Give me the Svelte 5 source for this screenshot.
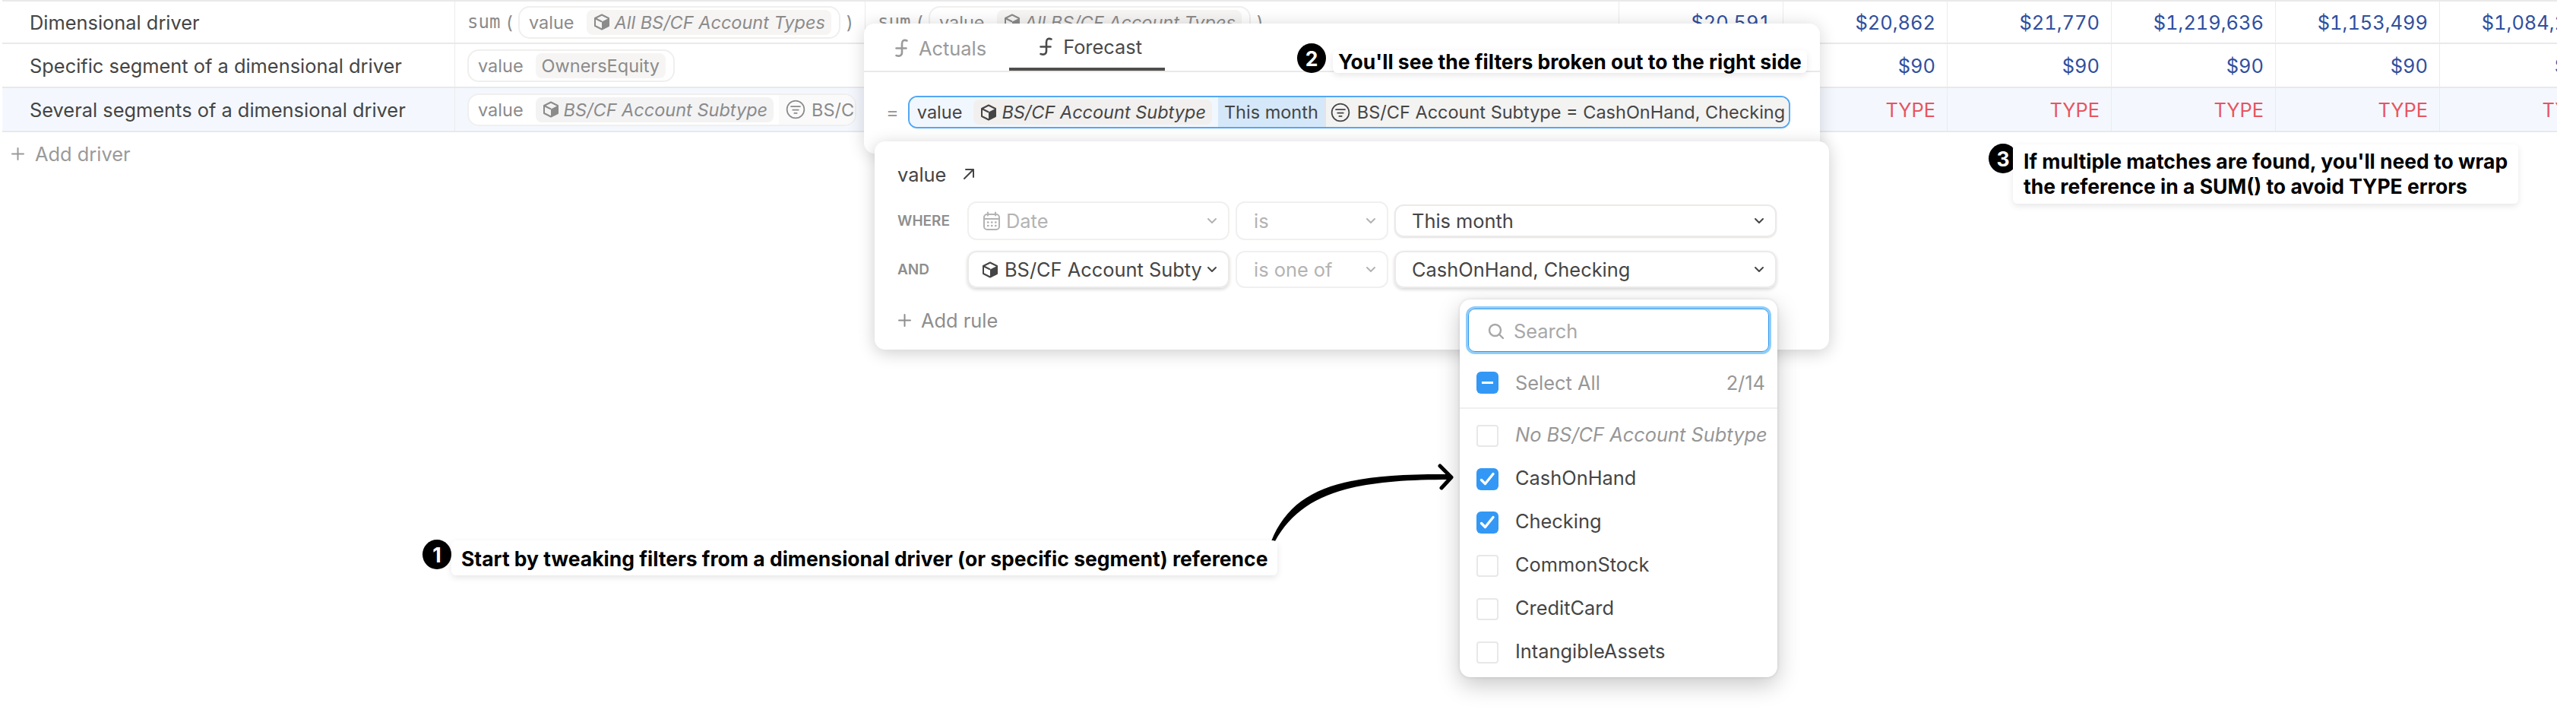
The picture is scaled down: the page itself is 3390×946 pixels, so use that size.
<script>
  const nums = [
    ['$20,591', '$20,862', '$21,770', '$1,219,636', '$1,153,499', '$1,084,217'],
    ['$90', '$90', '$90', '$90', '$90', '$90'],
    ['TYPE', 'TYPE', 'TYPE', 'TYPE', 'TYPE', 'TYPE']
  ];
  const options = [
    { label: 'No BS/CF Account Subtype', none: true },
    { label: 'CashOnHand', on: true },
    { label: 'Checking', on: true },
    { label: 'CommonStock' },
    { label: 'CreditCard' },
    { label: 'IntangibleAssets' }
  ];
</script>

{#snippet cube(size)}
  <svg class="ic" width={size} height={size} viewBox="0 0 24 24">
    <path d="M12 2.500 21 7v10l-9 4.500L3 17V7z" fill="none" stroke="currentColor" stroke-width="2" stroke-linejoin="round" />
    <path d="M12 11.500 21 7v10l-9 4.500z" fill="currentColor" />
    <path d="M3 7l9 4.500" stroke="currentColor" stroke-width="2" />
  </svg>
{/snippet}

{#snippet filter(size)}
  <svg class="ic" width={size} height={size} viewBox="0 0 24 24" fill="none" stroke="currentColor" stroke-width="1.600" stroke-linecap="round">
    <circle cx="12" cy="12" r="10.500" />
    <path d="M6.500 8.500h11M8.500 12.500h7M10.500 16.500h3" />
  </svg>
{/snippet}

{#snippet fn()}
  <svg class="ic" width="20" height="27" viewBox="0 0 20 27" fill="none" stroke="currentColor" stroke-width="2.600" stroke-linecap="round">
    <path d="M17.500 3.500c-4-1.500-6.500 0-6.500 4v11.500c0 4-3 5.500-7.500 4M3.500 13.500h13" />
  </svg>
{/snippet}

{#snippet chev()}
  <svg class="chev" width="14" height="9" viewBox="0 0 14 9" fill="none" stroke="currentColor" stroke-width="2" stroke-linecap="round" stroke-linejoin="round">
    <path d="M2 2l5 5 5-5" />
  </svg>
{/snippet}

{#snippet plus()}
  <svg class="ic" width="19" height="19" viewBox="0 0 19 19" stroke="currentColor" stroke-width="2" stroke-linecap="round">
    <path d="M9.500 2v15M2 9.500h15" />
  </svg>
{/snippet}

{#snippet pill(label, italic, withCube)}
  <span class="pill" class:em={italic}>
    {#if withCube}{@render cube(24)}{/if}
    {label}
  </span>
{/snippet}

<div class="page">
  <div class="table">
    <div class="row">
      <div class="cell name">Dimensional driver</div>
      <div class="cell">
        <span class="mono">sum</span><span class="paren">(</span>
        <span class="ref">value {@render pill('All BS/CF Account Types', true, true)}</span>
        <span class="paren close">)</span>
      </div>
      <div class="cell">
        <span class="mono">sum</span><span class="paren">(</span>
        <span class="ref">value {@render pill('All BS/CF Account Types', true, true)}</span>
        <span class="paren close">)</span>
      </div>
      {#each nums[0] as n}<div class="cell num">{n}</div>{/each}
    </div>
    <div class="row">
      <div class="cell name">Specific segment of a dimensional driver</div>
      <div class="cell">
        <span class="ref">value {@render pill('OwnersEquity', false, false)}</span>
      </div>
      <div class="cell"></div>
      {#each nums[1] as n}<div class="cell num">{n}</div>{/each}
    </div>
    <div class="row selected">
      <div class="cell name">Several segments of a dimensional driver</div>
      <div class="cell">
        <span class="ref clipped">
          value {@render pill('BS/CF Account Subtype', true, true)}
          <span class="filt">{@render filter(26)} BS/CF Account Subtype = CashOnHand, Checking</span>
        </span>
      </div>
      <div class="cell"></div>
      {#each nums[2] as n}<div class="cell num err">{n}</div>{/each}
    </div>
    <div class="add">{@render plus()} Add driver</div>
  </div>

  <!-- formula popover -->
  <div class="pop formula">
    <div class="tabs">
      <div class="tab">{@render fn()} Actuals</div>
      <div class="tab active">{@render fn()} Forecast</div>
    </div>
    <div class="field-row">
      <span class="eq">=</span>
      <div class="field">
        <div class="seg-main">value {@render pill('BS/CF Account Subtype', true, true)}</div>
        <div class="seg-date">This month</div>
        <div class="seg-filter">{@render filter(26)} BS/CF Account Subtype = CashOnHand, Checking</div>
      </div>
    </div>
  </div>

  <!-- rule editor -->
  <div class="pop rules">
    <div class="rules-title">
      value
      <svg width="16" height="16" viewBox="0 0 16 16" fill="none" stroke="currentColor" stroke-width="2" stroke-linecap="round" stroke-linejoin="round">
        <path d="M2 14 14 2M4 2h10v10" />
      </svg>
    </div>
    <div class="rule-grid">
      <span class="lbl">WHERE</span>
      <div class="sel off tall date">
        <span class="sel-text">
          <svg class="ic" width="24" height="26" viewBox="0 0 24 26" fill="none" stroke="currentColor" stroke-width="2" stroke-linecap="round">
            <rect x="2" y="4" width="20" height="20" rx="4" />
            <path d="M7 1.500v4M17 1.500v4M2 10h20" />
            <path d="M7 14.500h.5M12 14.500h.5M17 14.500h.5M7 19h.5M12 19h.5M17 19h.5" stroke-width="2.400" />
          </svg>
          Date
        </span>
        {@render chev()}
      </div>
      <div class="sel off tall"><span class="sel-text">is</span>{@render chev()}</div>
      <div class="sel value-sel"><span class="sel-text">This month</span>{@render chev()}</div>

      <span class="lbl">AND</span>
      <div class="sel raised"><span class="sel-text">{@render cube(24)} BS/CF Account Subty</span>{@render chev()}</div>
      <div class="sel off"><span class="sel-text">is one of</span>{@render chev()}</div>
      <div class="sel raised wide"><span class="sel-text">CashOnHand, Checking</span>{@render chev()}</div>
    </div>
    <div class="add-rule">{@render plus()} Add rule</div>
  </div>

  <!-- value picker -->
  <div class="pop picker">
    <div class="search">
      <svg width="22" height="22" viewBox="0 0 22 22" fill="none" stroke="currentColor" stroke-width="2.400" stroke-linecap="round">
        <circle cx="9.500" cy="9.500" r="7.500" />
        <path d="M15 15l5 5" />
      </svg>
      Search
    </div>
    <div class="opt all">
      <span class="box on">
        <svg width="15" height="3" viewBox="0 0 15 3"><rect width="15" height="3" fill="#fff" /></svg>
      </span>
      <span class="opt-label">Select All</span>
      <span class="count">2/14</span>
    </div>
    <div class="sep"></div>
    {#each options as o}
      <div class="opt" class:none={o.none}>
        <span class="box" class:on={o.on}>
          {#if o.on}
            <svg width="21" height="19" viewBox="0 0 21 19" fill="none" stroke="#fff" stroke-width="3.400" stroke-linecap="round" stroke-linejoin="round">
              <path d="M2.500 10.500l5 5 10.500-13" />
            </svg>
          {/if}
        </span>
        <span class="opt-label">{o.label}</span>
      </div>
    {/each}
  </div>

  <!-- annotations -->
  <svg class="arrow" width="260" height="110" viewBox="1670 610 260 110">
    <path d="M1673 712C1702 640 1770 623 1908 624L1908 631C1780 631 1714 648 1678 712Z" fill="#000" />
    <path d="M1895 613 1910 628 1897 642" fill="none" stroke="#000" stroke-width="5" stroke-linecap="round" stroke-linejoin="round" />
  </svg>

  <div class="note n1"><span class="badge">1</span><span class="note-text">Start by tweaking filters from a dimensional driver (or specific segment) reference</span></div>
  <div class="note n2"><span class="badge">2</span><span class="note-text">You'll see the filters broken out to the right side</span></div>
  <div class="note n3"><span class="badge">3</span><span class="note-text">If multiple matches are found, you'll need to wrap<br />the reference in a SUM() to avoid TYPE errors</span></div>
</div>

<style>
  :global(body) {
    margin: 0;
    background: #fff;
  }

  .page {
    position: relative;
    width: 3390px;
    height: 946px;
    overflow: hidden;
    font-family: Inter, "Noto Sans", sans-serif;
    font-size: 25.4px;
    color: #454545;
    background: #fff;
  }

  .ic {
    flex: none;
  }

  .table {
    width: 3362px;
    margin-left: 3px;
    border-top: 2px solid #e9e9e9;
    overflow: hidden;
  }

  .row {
    display: grid;
    grid-template-columns: 596px 540px 992px repeat(6, 216px);
    width: 3644px;
    height: 58px;
    box-sizing: border-box;
    border-bottom: 2px solid #e9e9e9;
  }

  .row:first-child {
    height: 56px;
  }

  .row.selected {
    background: #f4f8fe;
  }

  .cell {
    display: flex;
    align-items: center;
    box-sizing: border-box;
    padding-left: 16px;
    border-right: 1px solid #ebebeb;
    color: #8b8b8b;
    white-space: nowrap;
    min-width: 0;
  }

  .name {
    padding-left: 36px;
    color: #454545;
  }

  .num {
    justify-content: flex-end;
    padding: 0 15px 0 0;
    color: #2f4f9e;
    font-variant-numeric: tabular-nums;
    font-feature-settings: "tnum";
  }

  .num.err {
    color: #e8545e;
  }

  .mono {
    font-family: "DejaVu Sans Mono", monospace;
    font-size: 24px;
  }

  .paren {
    margin: 0 7px 0 8px;
    font-size: 23.5px;
  }

  .paren.close {
    margin: 0 0 0 8px;
  }

  .ref {
    display: inline-flex;
    align-items: center;
    gap: 16px;
    height: 43px;
    box-sizing: border-box;
    padding: 0 10px 0 12px;
    border: 2px solid #f0efee;
    border-radius: 15px;
    background: #fff;
    font-size: 23.5px;
  }

  .ref.clipped {
    width: 512px;
    padding-right: 0;
    gap: 0;
    overflow: hidden;
  }

  .ref.clipped .pill {
    margin-left: 16px;
    background: #f3f3f4;
  }

  .pill {
    display: inline-flex;
    align-items: center;
    gap: 5px;
    height: 33px;
    padding: 0 8px;
    border-radius: 8px;
    background: #f6f5f4;
  }

  .pill.em {
    font-style: italic;
  }

  .filt {
    display: inline-flex;
    align-items: center;
    gap: 8px;
    height: 100%;
    margin-left: 7px;
    padding-left: 9px;
    background: #fafafa;
  }

  .add {
    display: flex;
    align-items: center;
    gap: 13px;
    height: 56px;
    padding-left: 11px;
    color: #9a9a9a;
  }

  .pop {
    position: absolute;
    box-sizing: border-box;
    background: #fff;
    border-radius: 14px;
  }

  .formula {
    left: 1137px;
    top: 31px;
    width: 1258px;
    height: 171px;
    box-shadow: 0 2px 22px rgba(0, 0, 0, 0.16);
  }

  .tabs {
    display: flex;
    height: 62px;
    padding-left: 3px;
    border-bottom: 2px solid #e9e9e9;
  }

  .tab {
    display: flex;
    align-items: center;
    gap: 13px;
    height: 62px;
    box-sizing: border-box;
    padding: 3px 30px 0 36px;
    color: #9a9a9a;
  }

  .tab.active {
    padding-left: 38px;
    border-bottom: 4px solid #4f4e4c;
    color: #4a4a4a;
  }

  .field-row {
    display: flex;
    align-items: center;
    gap: 12px;
    margin-top: 31px;
    padding-left: 29px;
  }

  .eq {
    color: #9a9a9a;
  }

  .field {
    display: flex;
    width: 1161px;
    height: 43px;
    box-sizing: border-box;
    border: 2px solid #52a8f5;
    border-radius: 12px;
    overflow: hidden;
    white-space: nowrap;
    font-size: 23.5px;
  }

  .seg-main {
    display: flex;
    align-items: center;
    gap: 15px;
    padding: 0 8px 0 10px;
    background: #f1f7fe;
  }

  .seg-main .pill {
    background: #f1f0ef;
  }

  .seg-date {
    display: flex;
    align-items: center;
    padding: 0 8px;
    background: #d5e8f9;
    border-right: 2px solid #e4e4e4;
  }

  .seg-filter {
    display: flex;
    flex: 1;
    align-items: center;
    gap: 9px;
    padding-left: 6px;
    background: #f3f3f2;
  }

  .rules {
    left: 1151px;
    top: 186px;
    width: 1256px;
    height: 274px;
    padding: 28px 30px 0;
    box-shadow: 0 4px 22px rgba(0, 0, 0, 0.2);
  }

  .rules-title {
    display: flex;
    align-items: center;
    gap: 22px;
    height: 30px;
  }

  .rule-grid {
    display: grid;
    grid-template-columns: 84px 345px 201px 503px;
    column-gap: 8px;
    row-gap: 14px;
    align-items: center;
    margin-top: 21px;
  }

  .lbl {
    font-size: 19px;
    font-weight: 600;
    color: #8e8e8e;
  }

  .sel {
    display: flex;
    align-items: center;
    justify-content: space-between;
    height: 49px;
    box-sizing: border-box;
    padding: 0 14px 0 16px;
    border: 2px solid #eceae9;
    border-radius: 12px;
    white-space: nowrap;
    overflow: hidden;
    color: #454545;
  }

  .sel.tall {
    height: 51px;
  }

  .value-sel {
    height: 43px;
    padding-left: 21px;
    box-shadow: 0 1px 2px rgba(0, 0, 0, 0.12);
  }

  .raised {
    box-shadow: 0 2px 4px rgba(0, 0, 0, 0.16);
  }

  .wide {
    padding-left: 21px;
  }

  .off {
    padding-left: 22px;
    color: #b3b3b3;
    border-color: #f1f0ef;
  }

  .off.date {
    padding-left: 18px;
  }

  .sel-text {
    display: flex;
    align-items: center;
    gap: 7px;
  }

  .chev {
    flex: none;
  }

  .add-rule {
    display: flex;
    align-items: center;
    gap: 12px;
    margin-top: 27px;
    color: #8e8e8e;
  }

  .picker {
    left: 1921px;
    top: 394px;
    width: 418px;
    height: 497px;
    padding: 12px 11px 0;
    box-shadow: 0 10px 30px rgba(0, 0, 0, 0.22), 0 0 4px rgba(0, 0, 0, 0.12);
  }

  .search {
    display: flex;
    align-items: center;
    gap: 12px;
    height: 57px;
    box-sizing: border-box;
    padding: 2px 0 0 25px;
    border: 1.500px solid #2f97f0;
    border-radius: 9px;
    box-shadow: 0 0 0 3px #90cdf9;
    color: #a8a8a8;
  }

  .opt {
    display: flex;
    align-items: center;
    height: 57px;
    padding: 0 5px 0 11px;
  }

  .opt.all {
    margin-top: 12px;
  }

  .opt-label {
    margin: -4px 0 0 22px;
    white-space: nowrap;
  }

  .opt.all .opt-label,
  .count {
    margin-top: 0;
    color: #979797;
  }

  .opt.none .opt-label {
    font-style: italic;
    color: #979797;
  }

  .count {
    margin-left: auto;
  }

  .sep {
    height: 2px;
    margin: 4px -11px 7px;
    background: #f0f0f0;
  }

  .box {
    display: flex;
    flex: none;
    align-items: center;
    justify-content: center;
    width: 29px;
    height: 29px;
    box-sizing: border-box;
    border: 2px solid #e8e8e8;
    border-radius: 4px;
    background: #fff;
  }

  .box.on {
    border: 0;
    border-radius: 6px;
    background: #3398f5;
  }

  .arrow {
    position: absolute;
    left: 1670px;
    top: 610px;
  }

  .note {
    position: absolute;
    display: flex;
    align-items: flex-start;
    font-size: 26.5px;
    font-weight: 700;
    color: #000;
  }

  .note-text {
    box-sizing: border-box;
    padding: 0 13px;
    border-radius: 6px;
    background: #fff;
    box-shadow: 0 3px 8px rgba(0, 0, 0, 0.1);
    white-space: nowrap;
  }

  .badge {
    display: flex;
    flex: none;
    align-items: center;
    justify-content: center;
    width: 38px;
    height: 39px;
    border-radius: 50%;
    background: #000;
    color: #fff;
  }

  .n1 {
    left: 556px;
    top: 710px;
  }

  .n1 .note-text {
    height: 46px;
    margin-top: 1px;
    line-height: 48px;
  }

  .n2 {
    left: 1707px;
    top: 57px;
  }

  .n2 .note-text {
    height: 30px;
    margin: 9px 0 0 9px;
    padding: 0 7px;
    line-height: 31px;
  }

  .n3 {
    left: 2617px;
    top: 189px;
  }

  .n3 .note-text {
    height: 78px;
    margin: 1px 0 0 -6px;
    padding: 6px 14px 0;
    line-height: 33px;
  }
</style>
